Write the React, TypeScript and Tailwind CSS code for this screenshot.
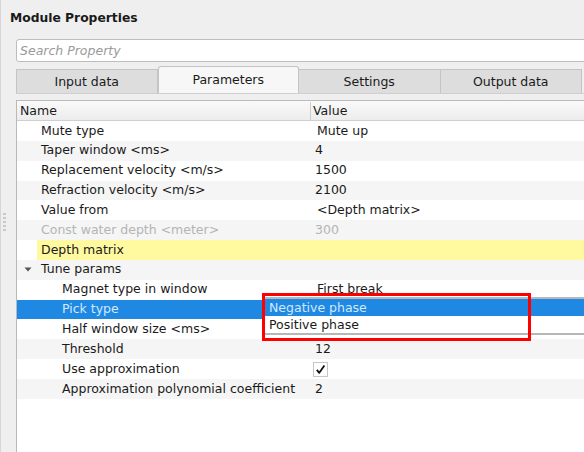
import React from "react";

type Row = {
	name: string;
	value?: string;
	level: number;
	kind?: "disabled" | "highlight" | "group" | "selected" | "check";
	valuePad?: boolean;
};

const rows: Row[] = [
	{ name: "Mute type", value: "Mute up", level: 1, valuePad: true },
	{ name: "Taper window <ms>", value: "4", level: 1 },
	{ name: "Replacement velocity <m/s>", value: "1500", level: 1 },
	{ name: "Refraction velocity <m/s>", value: "2100", level: 1 },
	{ name: "Value from", value: "<Depth matrix>", level: 1, valuePad: true },
	{ name: "Const water depth <meter>", value: "300", level: 1, kind: "disabled" },
	{ name: "Depth matrix", level: 1, kind: "highlight" },
	{ name: "Tune params", level: 1, kind: "group" },
	{ name: "Magnet type in window", value: "First break", level: 2, valuePad: true },
	{ name: "Pick type", level: 2, kind: "selected" },
	{ name: "Half window size <ms>", level: 2 },
	{ name: "Threshold", value: "12", level: 2 },
	{ name: "Use approximation", level: 2, kind: "check" },
	{ name: "Approximation polynomial coefficient", value: "2", level: 2 },
];

const tabs = ["Input data", "Parameters", "Settings", "Output data"];

function PropertyRow({ row, index }: { row: Row; index: number }) {
	const stripe = index % 2 === 1 ? "bg-[#f5f5f5]" : "bg-white";
	const selected = row.kind === "selected";
	const highlight = row.kind === "highlight";
	const rowBg = selected ? "bg-[#1f88e3]" : stripe;
	const textColor = selected
		? "text-[#d3e8fc]"
		: row.kind === "disabled"
			? "text-[#b4b4b4]"
			: "text-[#1a1a1a]";

	return (
		<div className={`flex h-[19.85px] items-center ${rowBg} ${textColor}`}>
			<div className="flex h-full w-[294px] shrink-0 items-center">
				<div className={row.level === 2 ? "w-[25px] shrink-0" : "w-[4px] shrink-0"} />
				<div className="flex h-full w-[16px] shrink-0 items-center justify-center">
					{row.kind === "group" && (
						<svg width="8" height="5" viewBox="0 0 8 5" className="ml-[-2px] mt-[-1px]">
							<path d="M0.5 0.5 L7.5 0.5 L4 4.5 Z" fill="#555" />
						</svg>
					)}
				</div>
				<div
					className={`flex h-full flex-1 items-center pl-[4px] ${highlight ? "bg-[#fff9a0]" : ""}`}
				>
					{row.name}
				</div>
			</div>
			<div
				className={`flex h-full flex-1 items-center ${highlight ? "bg-[#fff9a0]" : ""} ${
					row.valuePad ? "pl-[6px]" : "pl-[4px]"
				}`}
			>
				{row.kind === "check" ? (
					<div className="ml-[-2px] flex h-[15px] w-[15px] items-center justify-center border border-[#c6c6c6] bg-white">
						<svg width="11" height="11" viewBox="0 0 11 11">
							<path
								d="M1.8 5.8 L4.3 8.8 L9.4 1.6"
								fill="none"
								stroke="#111"
								strokeWidth="1.8"
								strokeLinejoin="round"
							/>
						</svg>
					</div>
				) : (
					row.value
				)}
			</div>
		</div>
	);
}

export default function App() {
	return (
		<div
			className="relative h-[452px] w-[584px] overflow-hidden border-l border-[#d6d6d6] bg-[#efefef] text-[12.5px] text-[#1a1a1a]"
			style={{ fontFamily: '"DejaVu Sans", Verdana, sans-serif' }}
		>
			<div className="h-[39px] pl-[9px] pt-[9px] text-[12.3px] font-bold leading-[18px] text-[#1a1a1a]">
				Module Properties
			</div>

			<div className="flex">
				{/* splitter handle */}
				<div className="flex w-[15px] shrink-0 flex-col items-start pl-[2px] pt-[174px]">
					<div className="flex flex-col gap-[2px]">
						{[0, 1, 2, 3, 4].map((i) => (
							<div key={i} className="h-[2px] w-[3px] bg-[#c9c9c9]" />
						))}
					</div>
				</div>

				<div className="flex w-[620px] shrink-0 flex-col">
					{/* search */}
					<div className="flex h-[23px] items-center rounded-[3px] border border-[#bdbdbd] bg-white pl-[3px] pt-[1px] italic text-[#9a9a9a]">
						Search Property
					</div>

					{/* tabs */}
					<div className="mt-[6px] flex h-[26px] items-end border-b border-[#cfcfcf]">
						{tabs.map((t, i) => {
							const active = i === 1;
							return (
								<div
									key={t}
									className={`flex w-[141.5px] shrink-0 items-center justify-center border border-b-0 border-[#c4c4c4] ${
										active
											? "h-[27px] rounded-t-[3px] bg-[#f7f7f7] pt-[1px]"
											: "h-[24px] bg-[#dddddd] pt-[2px]"
									} ${i > 0 && !active ? "border-l-0" : ""}`}
								>
									{t}
								</div>
							);
						})}
					</div>

					{/* property tree */}
					<div className="mt-[6px] h-[360px] border-l border-t border-[#b9b9b9] bg-white">
						<div className="flex h-[20px] items-center border-b border-[#cfcfcf] bg-gradient-to-b from-[#fafafa] to-[#ececec] pt-[1px]">
							<div className="w-[294px] shrink-0 border-r border-[#cdcdcd] pl-[3px]">Name</div>
							<div className="pl-[2px]">Value</div>
						</div>
						{rows.map((r, i) => (
							<PropertyRow key={r.name} row={r} index={i} />
						))}
					</div>
				</div>
			</div>

			{/* open combo list for Pick type */}
			<div className="absolute left-[263px] top-[297px] w-[340px] border-x border-y-[2px] border-[#b7b7b7] bg-white">
				<div className="flex h-[17px] items-center bg-[#1f88e3] pl-[4px] pt-[2px] text-[#d3e8fc]">
					Negative phase
				</div>
				<div className="flex h-[17px] items-center pl-[4px] pt-[1px] text-[#1a1a1a]">Positive phase</div>
			</div>
			<div className="pointer-events-none absolute left-[261px] top-[293px] h-[48px] w-[269px] border-[3px] border-[#ff0000]" />
		</div>
	);
}
